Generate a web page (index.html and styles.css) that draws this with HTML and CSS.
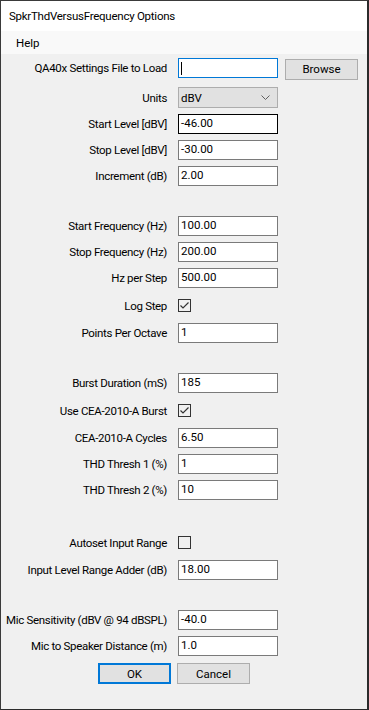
FILE: index.html
```html
<!DOCTYPE html>
<html lang="en">
<head>
  <meta charset="UTF-8">
  <title>SpkrThdVersusFrequency Options</title>
  <link rel="stylesheet" href="styles.css">
</head>
<body>

<div class="window">
  <div class="titlebar">SpkrThdVersusFrequency Options</div>
  <div class="menubar"><span class="menu-item">Help</span></div>

  <div class="form">
    <div class="row row-file">
      <label>QA40x Settings File to Load</label>
      <div class="field focused"><span class="caret"></span></div>
      <button class="btn browse">Browse</button>
    </div>
    <div class="row row-combo">
      <label>Units</label>
      <div class="combo">
        <span>dBV</span>
        <svg width="9" height="5" viewBox="0 0 9 5"><polyline points="0.5,0.5 4.5,4.5 8.5,0.5" fill="none" stroke="#606060" stroke-width="1"/></svg>
      </div>
    </div>
    <div class="row">
      <label>Start Level [dBV]</label>
      <div class="field hover">-46.00</div>
    </div>
    <div class="row">
      <label>Stop Level [dBV]</label>
      <div class="field">-30.00</div>
    </div>
    <div class="row">
      <label>Increment (dB)</label>
      <div class="field">2.00</div>
    </div>

    <div class="row group">
      <label>Start Frequency (Hz)</label>
      <div class="field">100.00</div>
    </div>
    <div class="row">
      <label>Stop Frequency (Hz)</label>
      <div class="field">200.00</div>
    </div>
    <div class="row">
      <label>Hz per Step</label>
      <div class="field">500.00</div>
    </div>
    <div class="row row-check">
      <label>Log Step</label>
      <div class="check checked">
        <svg width="11" height="11" viewBox="0 0 11 11"><polyline points="1.5,5.5 4,8 9.5,2.5" fill="none" stroke="#333" stroke-width="1.2"/></svg>
      </div>
    </div>
    <div class="row">
      <label>Points Per Octave</label>
      <div class="field">1</div>
    </div>

    <div class="row group">
      <label>Burst Duration (mS)</label>
      <div class="field">185</div>
    </div>
    <div class="row row-check">
      <label>Use CEA-2010-A Burst</label>
      <div class="check checked">
        <svg width="11" height="11" viewBox="0 0 11 11"><polyline points="1.5,5.5 4,8 9.5,2.5" fill="none" stroke="#333" stroke-width="1.2"/></svg>
      </div>
    </div>
    <div class="row">
      <label>CEA-2010-A Cycles</label>
      <div class="field">6.50</div>
    </div>
    <div class="row">
      <label>THD Thresh 1 (%)</label>
      <div class="field">1</div>
    </div>
    <div class="row">
      <label>THD Thresh 2 (%)</label>
      <div class="field">10</div>
    </div>

    <div class="row row-check group-wide">
      <label>Autoset Input Range</label>
      <div class="check"></div>
    </div>
    <div class="row">
      <label>Input Level Range Adder (dB)</label>
      <div class="field">18.00</div>
    </div>

    <div class="row group">
      <label>Mic Sensitivity (dBV @ 94 dBSPL)</label>
      <div class="field">-40.0</div>
    </div>
    <div class="row">
      <label>Mic to Speaker Distance (m)</label>
      <div class="field">1.0</div>
    </div>

    <div class="buttons">
      <button class="btn ok">OK</button>
      <button class="btn">Cancel</button>
    </div>
  </div>
</div>

</body>
</html>
```

FILE: styles.css
```css
* {
  margin: 0;
  padding: 0;
  box-sizing: border-box;
}

body {
  font-family: Roboto, 'Liberation Sans', sans-serif;
  font-size: 11.5px;
  color: #000;
  background: #2b2b2b;
  width: 369px;
  height: 710px;
  overflow: hidden;
}

.window {
  width: 369px;
  height: 710px;
  border-top: 1px solid #3a3a3a;
  border-left: 1px solid #3a3a3a;
  border-right: 2px solid #2b2b2b;
  border-bottom: 1px solid #2b2b2b;
  background: #f0f0f0;
  display: flex;
  flex-direction: column;
}

.titlebar {
  height: 30px;
  background: #fff;
  padding-left: 8px;
  display: flex;
  align-items: center;
  font-size: 11.5px;
  letter-spacing: -0.25px;
  white-space: nowrap;
}

.menubar {
  height: 23px;
  background: #f9f9f9;
  display: flex;
  align-items: center;
  padding-left: 8px;
}

.menu-item {
  padding: 0 7px;
}

.form {
  padding-top: 4px;
  display: flex;
  flex-direction: column;
}

/* one label + control line */
.row {
  display: flex;
  align-items: center;
  height: 20px;
  margin-bottom: 6px;
}

.row label {
  width: 167px;
  text-align: right;
  padding-right: 1px;
  flex-shrink: 0;
  white-space: nowrap;
  letter-spacing: -0.32px;
}

.row-combo {
  height: 21px;
  margin-top: 3px;
  margin-bottom: 6px;
}

.row-check {
  height: 23px;
}

.group {
  margin-top: 24px;
}

.group-wide {
  margin-top: 25px;
}

.field {
  margin-left: 10px;
  width: 100px;
  height: 20px;
  background: #fff;
  border: 1px solid #7a7a7a;
  padding: 0 2px;
  display: flex;
  align-items: center;
  line-height: 1;
}

.field.focused {
  border-color: #0078d7;
}

.field.hover {
  border-color: #000;
}

.caret {
  display: block;
  width: 1px;
  height: 13px;
  background: #000;
}

.combo {
  margin-left: 10px;
  width: 100px;
  height: 21px;
  background: #e1e1e1;
  border: 1px solid #adadad;
  padding: 0 7px 0 2px;
  display: flex;
  align-items: center;
  justify-content: space-between;
}

.check {
  margin-left: 10px;
  width: 13px;
  height: 13px;
  border: 1px solid #333;
  background: transparent;
  display: flex;
  align-items: center;
  justify-content: center;
}

.btn {
  font-family: inherit;
  font-size: 11.5px;
  background: #e1e1e1;
  border: 1px solid #adadad;
  height: 21px;
  color: #000;
}

.browse {
  margin-left: 7px;
  width: 73px;
  margin-top: 2px;
}

.buttons {
  display: flex;
  gap: 6px;
  padding-left: 97px;
  margin-top: 1px;
}

.buttons .btn {
  width: 73px;
}

.btn.ok {
  border: 2px solid #0078d7;
}
```
